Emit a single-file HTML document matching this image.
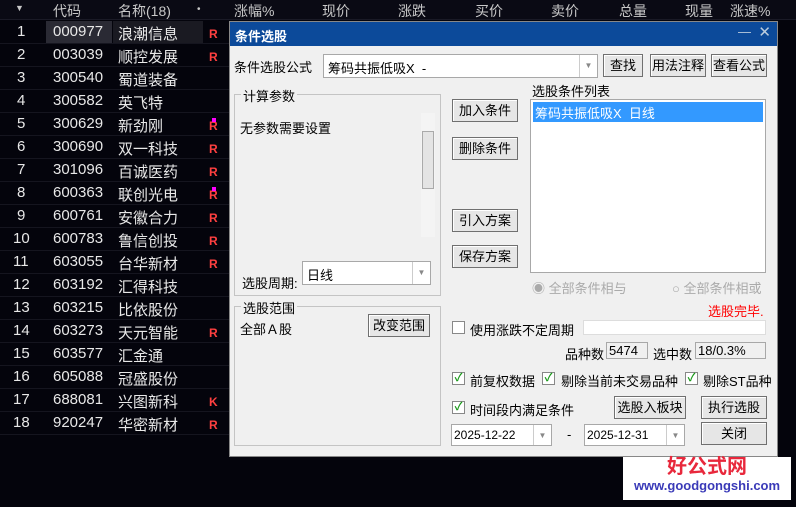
<!DOCTYPE html>
<html><head><meta charset="utf-8"><style>
*{margin:0;padding:0;box-sizing:border-box}
body{width:796px;height:507px;background:#04040c;position:relative;overflow:hidden;font-family:"Liberation Sans","Noto Sans CJK SC",sans-serif;font-size:13px}
.a{position:absolute;white-space:nowrap}
.hd{color:#c8c8c8;font-size:14px;top:1px}
.row{position:absolute;left:0;width:230px;height:23px;border-bottom:1px solid #15151f;color:#e8e8e8;font-size:15px}
.row span{position:absolute;top:2px}
.r{color:#ff4040;font-weight:bold;font-size:12px;left:209px;top:6px!important}
.dlg{position:absolute;left:229px;top:21px;width:549px;height:436px;background:#f0f0f0;border:1px solid #888}
.tb{position:absolute;left:0;top:0;width:100%;height:24px;background:#0c4a9a;color:#fff;font-weight:bold;font-size:13px;padding:4px 5px}
.btn{position:absolute;background:#e6e6e6;border:1px solid #707070;box-shadow:inset 1px 1px #fff;font-size:13px;text-align:center;color:#000;height:23px;line-height:21px}
.box{position:absolute;background:#fff;border:1px solid #a8a8a8}
.grp{position:absolute;border:1px solid #c4c4c4}
.gl{position:absolute;top:-9px;left:6px;background:#f0f0f0;padding:0 2px;font-size:13px}
.cb{position:absolute;width:13px;height:13px;border:1px solid #888;background:#fff;font-size:11px;color:#1a9a1a;line-height:11px;text-align:center;font-weight:bold}
.dd{position:absolute;right:0;top:0;bottom:0;width:18px;border-left:1px solid #ccc;color:#888;font-size:8px;text-align:center;line-height:22px}
</style></head><body>
<div class="a" style="left:0;top:0;width:796px;height:20px;background:#0a0a14;border-bottom:1px solid #1a1a26"></div>
<div class="a hd" style="left:15px;top:3px;font-size:9px">▼</div>
<div class="a hd" style="left:53px">代码</div>
<div class="a hd" style="left:118px">名称(18)</div>
<div class="a hd" style="left:197px;font-size:10px;top:4px">•</div>
<div class="a hd" style="left:234px">涨幅%</div>
<div class="a hd" style="left:322px">现价</div>
<div class="a hd" style="left:398px">涨跌</div>
<div class="a hd" style="left:475px">买价</div>
<div class="a hd" style="left:551px">卖价</div>
<div class="a hd" style="left:619px">总量</div>
<div class="a hd" style="left:685px">现量</div>
<div class="a hd" style="left:730px">涨速%</div>
<div class="a" style="left:46px;top:21px;width:66px;height:22px;background:#2a2a34"></div>
<div class="a" style="left:113px;top:21px;width:90px;height:22px;background:#1a1a22"></div>

<div class="row" style="top:21px"><span style="left:17px">1</span><span style="left:53px">000977</span><span style="left:118px">浪潮信息</span><span class="r">R</span></div>
<div class="row" style="top:44px"><span style="left:17px">2</span><span style="left:53px">003039</span><span style="left:118px">顺控发展</span><span class="r">R</span></div>
<div class="row" style="top:67px"><span style="left:17px">3</span><span style="left:53px">300540</span><span style="left:118px">蜀道装备</span></div>
<div class="row" style="top:90px"><span style="left:17px">4</span><span style="left:53px">300582</span><span style="left:118px">英飞特</span></div>
<div class="row" style="top:113px"><span style="left:17px">5</span><span style="left:53px">300629</span><span style="left:118px">新劲刚</span><span class="r">R</span></div>
<div class="row" style="top:136px"><span style="left:17px">6</span><span style="left:53px">300690</span><span style="left:118px">双一科技</span><span class="r">R</span></div>
<div class="row" style="top:159px"><span style="left:17px">7</span><span style="left:53px">301096</span><span style="left:118px">百诚医药</span><span class="r">R</span></div>
<div class="row" style="top:182px"><span style="left:17px">8</span><span style="left:53px">600363</span><span style="left:118px">联创光电</span><span class="r">R</span></div>
<div class="row" style="top:205px"><span style="left:17px">9</span><span style="left:53px">600761</span><span style="left:118px">安徽合力</span><span class="r">R</span></div>
<div class="row" style="top:228px"><span style="left:13px">10</span><span style="left:53px">600783</span><span style="left:118px">鲁信创投</span><span class="r">R</span></div>
<div class="row" style="top:251px"><span style="left:13px">11</span><span style="left:53px">603055</span><span style="left:118px">台华新材</span><span class="r">R</span></div>
<div class="row" style="top:274px"><span style="left:13px">12</span><span style="left:53px">603192</span><span style="left:118px">汇得科技</span></div>
<div class="row" style="top:297px"><span style="left:13px">13</span><span style="left:53px">603215</span><span style="left:118px">比依股份</span></div>
<div class="row" style="top:320px"><span style="left:13px">14</span><span style="left:53px">603273</span><span style="left:118px">天元智能</span><span class="r">R</span></div>
<div class="row" style="top:343px"><span style="left:13px">15</span><span style="left:53px">603577</span><span style="left:118px">汇金通</span></div>
<div class="row" style="top:366px"><span style="left:13px">16</span><span style="left:53px">605088</span><span style="left:118px">冠盛股份</span></div>
<div class="row" style="top:389px"><span style="left:13px">17</span><span style="left:53px">688081</span><span style="left:118px">兴图新科</span><span class="r">K</span></div>
<div class="row" style="top:412px"><span style="left:13px">18</span><span style="left:53px">920247</span><span style="left:118px">华密新材</span><span class="r">R</span></div>
<div class="a" style="left:212px;top:118px;width:4px;height:4px;background:#f0f"></div>
<div class="a" style="left:212px;top:187px;width:4px;height:4px;background:#f0f"></div>

<div class="dlg">
<div class="tb">条件选股<span style="position:absolute;right:26px;top:2px;font-weight:normal;color:#bcd">—</span><span style="position:absolute;right:6px;top:1px;font-weight:normal;color:#bcd;font-size:15px">✕</span></div>
<div class="a" style="left:4px;top:35px">条件选股公式</div>
<div class="box" style="left:93px;top:32px;width:275px;height:24px;padding:3px 4px">筹码共振低吸X&nbsp; -<div class="dd">▼</div></div>
<div class="btn" style="left:373px;top:32px;width:40px">查找</div>
<div class="btn" style="left:420px;top:32px;width:56px">用法注释</div>
<div class="btn" style="left:481px;top:32px;width:56px">查看公式</div>
<div class="grp" style="left:4px;top:72px;width:207px;height:202px"><div class="gl">计算参数</div>
<div class="a" style="left:5px;top:23px">无参数需要设置</div>
<div class="a" style="left:186px;top:18px;width:14px;height:124px;background:#f4f4f4"><div style="position:absolute;top:18px;left:1px;width:12px;height:58px;background:#e4e4e4;border:1px solid #aaa"></div></div>
<div class="a" style="left:7px;top:178px">选股周期:</div>
<div class="box" style="left:67px;top:166px;width:129px;height:24px;padding:3px 4px">日线<div class="dd">▼</div></div>
</div>
<div class="btn" style="left:222px;top:77px;width:66px">加入条件</div>
<div class="btn" style="left:222px;top:115px;width:66px">删除条件</div>
<div class="btn" style="left:222px;top:187px;width:66px">引入方案</div>
<div class="btn" style="left:222px;top:223px;width:66px">保存方案</div>
<div class="a" style="left:302px;top:59px">选股条件列表</div>
<div class="box" style="left:300px;top:77px;width:236px;height:174px"><div style="margin:2px;background:#3399ff;color:#fff;height:20px;padding:1px 2px">筹码共振低吸X&nbsp; 日线</div></div>
<div class="a" style="left:302px;top:256px;color:#aaa">◉ 全部条件相与</div>
<div class="a" style="left:442px;top:256px;color:#aaa">○ 全部条件相或</div>
<div class="a" style="left:478px;top:279px;color:#f00">选股完毕.</div>
<div class="grp" style="left:4px;top:284px;width:207px;height:140px"><div class="gl">选股范围</div>
<div class="a" style="left:5px;top:12px">全部Ａ股</div>
<div class="btn" style="left:133px;top:7px;width:62px">改变范围</div></div>
<div class="cb" style="left:222px;top:299px"></div><div class="a" style="left:240px;top:298px">使用涨跌不定周期</div>
<div class="box" style="left:353px;top:298px;width:183px;height:15px;border-color:#ddd"></div>
<div class="a" style="left:335px;top:322px">品种数</div><div class="box" style="left:376px;top:320px;width:42px;height:17px;background:#f0f0f0;padding:0 2px">5474</div>
<div class="a" style="left:423px;top:322px">选中数</div><div class="box" style="left:465px;top:320px;width:71px;height:17px;background:#f0f0f0;padding:0 2px">18/0.3%</div>
<div class="cb" style="left:222px;top:350px">✓</div><div class="a" style="left:240px;top:349px">前复权数据</div>
<div class="cb" style="left:312px;top:350px">✓</div><div class="a" style="left:331px;top:349px">剔除当前未交易品种</div>
<div class="cb" style="left:455px;top:350px">✓</div><div class="a" style="left:473px;top:349px">剔除ST品种</div>
<div class="cb" style="left:222px;top:379px">✓</div><div class="a" style="left:240px;top:378px">时间段内满足条件</div>
<div class="btn" style="left:384px;top:374px;width:72px">选股入板块</div>
<div class="btn" style="left:471px;top:374px;width:66px">执行选股</div>
<div class="box" style="left:221px;top:402px;width:101px;height:22px;padding:3px 2px;font-size:12px">2025-12-22<div class="dd">▼</div></div>
<div class="a" style="left:337px;top:405px">-</div>
<div class="box" style="left:354px;top:402px;width:101px;height:22px;padding:3px 2px;font-size:12px">2025-12-31<div class="dd">▼</div></div>
<div class="btn" style="left:471px;top:400px;width:66px">关闭</div>
</div>
<div class="a" style="left:623px;top:457px;width:168px;height:43px;background:#fff;text-align:center">
<div style="color:#e8283c;font-weight:bold;font-size:20px;line-height:22px;margin-top:-1px">好公式网</div>
<div style="color:#3a3ab8;font-weight:bold;font-size:13px;line-height:16px">www.goodgongshi.com</div></div>
</body></html>
